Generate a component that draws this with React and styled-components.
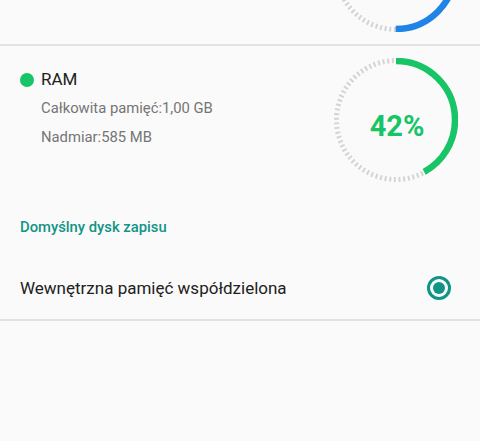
import React from "react";
import styled, { createGlobalStyle } from "styled-components";

const Global = createGlobalStyle`
  html, body { margin: 0; padding: 0; background: #fafafa; }
  body { font-family: Roboto, "Noto Sans", Arial, sans-serif; -webkit-font-smoothing: antialiased; }
`;

const Viewport = styled.div`
  width: 480px;
  height: 441px;
  overflow: hidden;
  background: #fafafa;
`;

const Scroller = styled.div`
  margin-top: -104px;
`;

const StorageRow = styled.div`
  display: flex;
  align-items: flex-start;
  justify-content: space-between;
  padding: 12px 22px 12px 20px;
`;

const Divider = styled.div`
  height: 2px;
  background: #e2e2e2;
`;

const Info = styled.div`
  display: flex;
  flex-direction: column;
  gap: 9px;
  padding-top: 11px;
`;

const TitleLine = styled.div`
  display: flex;
  align-items: center;
  gap: 7px;
  font-size: 17px;
  line-height: 20px;
  color: #212121;
`;

const Dot = styled.span`
  width: 14px;
  height: 14px;
  border-radius: 50%;
  background: ${(p) => p.$color};
  margin-top: 1px;
`;

const Detail = styled.div`
  font-size: 14.8px;
  line-height: 20px;
  color: #757575;
  padding-left: 21px;
`;

const RingBox = styled.div`
  position: relative;
  width: 124px;
  height: 124px;
  flex: none;
`;

const Percent = styled.div`
  position: absolute;
  left: 0;
  right: 0;
  top: 51px;
  padding-left: 2px;
  text-align: center;
  font-size: 29px;
  line-height: 34px;
  font-weight: 700;
  color: ${(p) => p.$color};
`;

const SectionHeader = styled.div`
  padding: 23px 20px 0;
  font-size: 14.8px;
  line-height: 20px;
  font-weight: 500;
  color: #129486;
`;

const OptionRow = styled.label`
  display: flex;
  align-items: center;
  justify-content: space-between;
  height: 62px;
  margin-top: 20px;
  padding: 0 29px 0 20px;
  font-size: 17px;
  color: #212121;
`;

const Radio = styled.span`
  box-sizing: border-box;
  width: 24px;
  height: 24px;
  border-radius: 50%;
  border: 3px solid #0f9485;
  display: flex;
  align-items: center;
  justify-content: center;
  &::after {
    content: "";
    width: 12px;
    height: 12px;
    border-radius: 50%;
    background: #0f9485;
  }
`;

function Ring({ percent, color, label }) {
  const r = 59;
  const c = 2 * Math.PI * r;
  const tr = 59.5;
  const tc = 2 * Math.PI * tr;
  const period = tc / 80;
  return (
    <RingBox>
      <svg width="124" height="124" viewBox="0 0 124 124">
        <circle
          cx="62"
          cy="62"
          r={tr}
          fill="none"
          stroke="#d4d4d4"
          strokeWidth="5"
          strokeDasharray={`2 ${period - 2}`}
        />
        <circle
          cx="62"
          cy="62"
          r={r}
          fill="none"
          stroke={color}
          strokeWidth="6.5"
          strokeDasharray={`${(c * percent) / 100} ${c}`}
          transform="rotate(-90 62 62)"
        />
      </svg>
      {label && <Percent $color={color}>{label}</Percent>}
    </RingBox>
  );
}

export default function App() {
  return (
    <Viewport>
      <Global />
      <Scroller>
        <StorageRow>
          <div />
          <Ring percent={50} color="#1f84e6" />
        </StorageRow>
        <Divider />
        <StorageRow>
          <Info>
            <TitleLine>
              <Dot $color="#17c466" />
              RAM
            </TitleLine>
            <Detail>Całkowita pamięć:1,00 GB</Detail>
            <Detail>Nadmiar:585 MB</Detail>
          </Info>
          <Ring percent={42} color="#17c466" label="42%" />
        </StorageRow>
        <SectionHeader>Domyślny dysk zapisu</SectionHeader>
        <OptionRow>
          Wewnętrzna pamięć współdzielona
          <Radio />
        </OptionRow>
        <Divider />
      </Scroller>
    </Viewport>
  );
}
